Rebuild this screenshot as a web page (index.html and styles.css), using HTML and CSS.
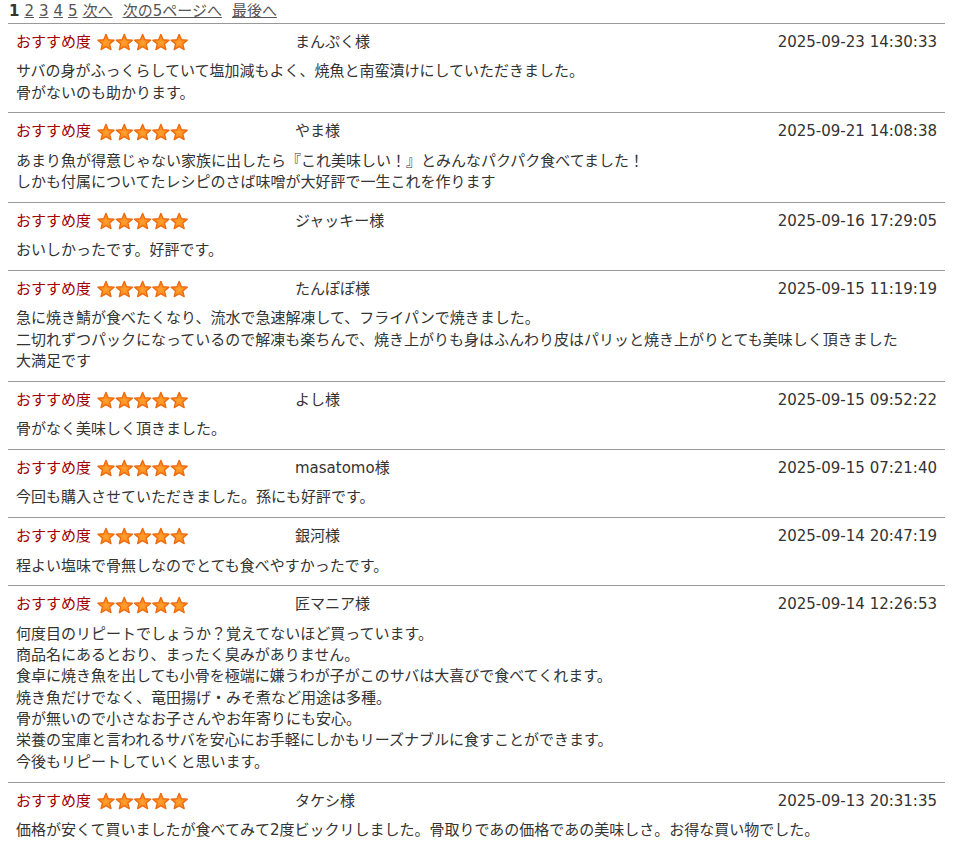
FILE: index.html
```html
<!DOCTYPE html>
<html lang="ja">
<head>
<meta charset="utf-8">
<title>レビュー</title>
<link rel="stylesheet" href="styles.css">
</head>
<body>
<svg class="defs" width="0" height="0" aria-hidden="true">
  <defs>
    <radialGradient id="sg" cx="50%" cy="55%" r="55%">
      <stop offset="0%" stop-color="#ffa236"/>
      <stop offset="100%" stop-color="#ff7c00"/>
    </radialGradient>
    <polygon id="star" points="9,1.3 11.23,6.73 17.08,7.17 12.61,10.97 14,16.68 9,13.6 4,16.68 5.39,10.97 0.92,7.17 6.77,6.73" fill="url(#sg)" stroke="#ec6a10" stroke-width="1.3" stroke-linejoin="round"/>
  </defs>
</svg>
<div class="wrap">
  <div class="pager">
    <b class="cur">1</b>
    <a href="#">2</a>
    <a href="#">3</a>
    <a href="#">4</a>
    <a href="#">5</a>
    <a href="#">次へ</a>
    <a href="#" class="far">次の5ページへ</a>
    <a href="#" class="far">最後へ</a>
  </div>

  <div class="review">
    <div class="head">
      <div class="rate"><span class="label">おすすめ度</span><svg class="stars" width="92" height="18" viewBox="0 0 92 18"><use href="#star"/><use href="#star" x="18.3"/><use href="#star" x="36.6"/><use href="#star" x="54.9"/><use href="#star" x="73.2"/></svg></div>
      <div class="name">まんぷく様</div>
      <div class="date">2025-09-23 14:30:33</div>
    </div>
    <div class="body">サバの身がふっくらしていて塩加減もよく、焼魚と南蛮漬けにしていただきました。<br>骨がないのも助かります。</div>
  </div>

  <div class="review">
    <div class="head">
      <div class="rate"><span class="label">おすすめ度</span><svg class="stars" width="92" height="18" viewBox="0 0 92 18"><use href="#star"/><use href="#star" x="18.3"/><use href="#star" x="36.6"/><use href="#star" x="54.9"/><use href="#star" x="73.2"/></svg></div>
      <div class="name">やま様</div>
      <div class="date">2025-09-21 14:08:38</div>
    </div>
    <div class="body">あまり魚が得意じゃない家族に出したら『これ美味しい！』とみんなパクパク食べてました！<br>しかも付属についてたレシピのさば味噌が大好評で一生これを作ります</div>
  </div>

  <div class="review">
    <div class="head">
      <div class="rate"><span class="label">おすすめ度</span><svg class="stars" width="92" height="18" viewBox="0 0 92 18"><use href="#star"/><use href="#star" x="18.3"/><use href="#star" x="36.6"/><use href="#star" x="54.9"/><use href="#star" x="73.2"/></svg></div>
      <div class="name">ジャッキー様</div>
      <div class="date">2025-09-16 17:29:05</div>
    </div>
    <div class="body">おいしかったです。好評です。</div>
  </div>

  <div class="review">
    <div class="head">
      <div class="rate"><span class="label">おすすめ度</span><svg class="stars" width="92" height="18" viewBox="0 0 92 18"><use href="#star"/><use href="#star" x="18.3"/><use href="#star" x="36.6"/><use href="#star" x="54.9"/><use href="#star" x="73.2"/></svg></div>
      <div class="name">たんぽぽ様</div>
      <div class="date">2025-09-15 11:19:19</div>
    </div>
    <div class="body">急に焼き鯖が食べたくなり、流水で急速解凍して、フライパンで焼きました。<br>二切れずつパックになっているので解凍も楽ちんで、焼き上がりも身はふんわり皮はパリッと焼き上がりとても美味しく頂きました<br>大満足です</div>
  </div>

  <div class="review">
    <div class="head">
      <div class="rate"><span class="label">おすすめ度</span><svg class="stars" width="92" height="18" viewBox="0 0 92 18"><use href="#star"/><use href="#star" x="18.3"/><use href="#star" x="36.6"/><use href="#star" x="54.9"/><use href="#star" x="73.2"/></svg></div>
      <div class="name">よし様</div>
      <div class="date">2025-09-15 09:52:22</div>
    </div>
    <div class="body">骨がなく美味しく頂きました。</div>
  </div>

  <div class="review">
    <div class="head">
      <div class="rate"><span class="label">おすすめ度</span><svg class="stars" width="92" height="18" viewBox="0 0 92 18"><use href="#star"/><use href="#star" x="18.3"/><use href="#star" x="36.6"/><use href="#star" x="54.9"/><use href="#star" x="73.2"/></svg></div>
      <div class="name">masatomo様</div>
      <div class="date">2025-09-15 07:21:40</div>
    </div>
    <div class="body">今回も購入させていただきました。孫にも好評です。</div>
  </div>

  <div class="review">
    <div class="head">
      <div class="rate"><span class="label">おすすめ度</span><svg class="stars" width="92" height="18" viewBox="0 0 92 18"><use href="#star"/><use href="#star" x="18.3"/><use href="#star" x="36.6"/><use href="#star" x="54.9"/><use href="#star" x="73.2"/></svg></div>
      <div class="name">銀河様</div>
      <div class="date">2025-09-14 20:47:19</div>
    </div>
    <div class="body">程よい塩味で骨無しなのでとても食べやすかったです。</div>
  </div>

  <div class="review">
    <div class="head">
      <div class="rate"><span class="label">おすすめ度</span><svg class="stars" width="92" height="18" viewBox="0 0 92 18"><use href="#star"/><use href="#star" x="18.3"/><use href="#star" x="36.6"/><use href="#star" x="54.9"/><use href="#star" x="73.2"/></svg></div>
      <div class="name">匠マニア様</div>
      <div class="date">2025-09-14 12:26:53</div>
    </div>
    <div class="body">何度目のリピートでしょうか？覚えてないほど買っています。<br>商品名にあるとおり、まったく臭みがありません。<br>食卓に焼き魚を出しても小骨を極端に嫌うわが子がこのサバは大喜びで食べてくれます。<br>焼き魚だけでなく、竜田揚げ・みそ煮など用途は多種。<br>骨が無いので小さなお子さんやお年寄りにも安心。<br>栄養の宝庫と言われるサバを安心にお手軽にしかもリーズナブルに食すことができます。<br>今後もリピートしていくと思います。</div>
  </div>

  <div class="review">
    <div class="head">
      <div class="rate"><span class="label">おすすめ度</span><svg class="stars" width="92" height="18" viewBox="0 0 92 18"><use href="#star"/><use href="#star" x="18.3"/><use href="#star" x="36.6"/><use href="#star" x="54.9"/><use href="#star" x="73.2"/></svg></div>
      <div class="name">タケシ様</div>
      <div class="date">2025-09-13 20:31:35</div>
    </div>
    <div class="body">価格が安くて買いましたが食べてみて2度ビックリしました。骨取りであの価格であの美味しさ。お得な買い物でした。</div>
  </div>
</div>
</body>
</html>
```

FILE: styles.css
```css
html, body {
  margin: 0;
  padding: 0;
  background: #fff;
}

body {
  font-family: "DejaVu Sans", "Noto Sans CJK JP", sans-serif;
  font-size: 15px;
  color: #333;
}

.defs {
  position: absolute;
  width: 0;
  height: 0;
  overflow: hidden;
}

.wrap {
  width: 937px;
  margin: 0 0 0 8px;
}

.pager {
  display: flex;
  align-items: center;
  gap: 5px;
  height: 23px;
  line-height: 23px;
  padding-left: 1px;
  border-bottom: 1px solid #999;
}

.pager .cur {
  color: #333;
  font-weight: bold;
}

.pager a {
  color: #555;
  text-decoration: underline;
}

.pager a.far {
  margin-left: 5px;
}

.review {
  padding: 8px 8px 8.5px 8px;
  border-bottom: 1px solid #999;
}

.head {
  display: grid;
  grid-template-columns: 279px 1fr auto;
  align-items: center;
  line-height: 21.33px;
}

.rate {
  display: flex;
  align-items: center;
  gap: 6px;
}

.label {
  color: #a00000;
}

.stars {
  display: block;
  margin-top: -1px;
}

.name {
  color: #333;
}

.date {
  color: #333;
  text-align: right;
}

.body {
  margin-top: 8px;
  line-height: 21.33px;
}
```
